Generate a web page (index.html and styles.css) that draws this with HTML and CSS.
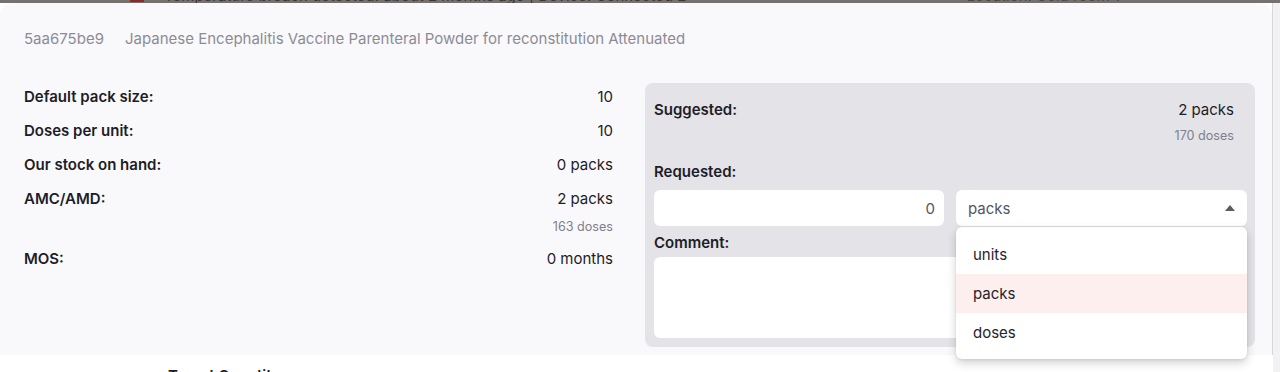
FILE: index.html
```html
<!DOCTYPE html>
<html lang="en">
<head>
    <meta charset="UTF-8">
    <meta name="viewport" content="width=device-width, initial-scale=1.0">
    <title>Request line</title>
    <link rel="stylesheet" href="styles.css">
</head>
<body>
    <div class="backdrop">
        <div class="backdrop-text">
            <span class="alert-icon"></span>
            <span>Temperature breach detected: about 2 months ago | Device: Connected 2</span>
            <span class="backdrop-loc">Location: Cold room 1</span>
        </div>
    </div>

    <div class="page">
        <div class="panel">
            <div class="panel-header">
                <span class="item-code">5aa675be9</span>
                <span class="item-name">Japanese Encephalitis Vaccine Parenteral Powder for reconstitution Attenuated</span>
            </div>

            <div class="panel-body">
                <!-- Item stats -->
                <div class="stats">
                    <div class="stat-row">
                        <span class="label">Default pack size:</span>
                        <span class="value">10</span>
                    </div>
                    <div class="stat-row">
                        <span class="label">Doses per unit:</span>
                        <span class="value">10</span>
                    </div>
                    <div class="stat-row">
                        <span class="label">Our stock on hand:</span>
                        <span class="value">0 packs</span>
                    </div>
                    <div class="stat-row">
                        <span class="label">AMC/AMD:</span>
                        <div class="value-stack">
                            <span class="value">2 packs</span>
                            <span class="sub-value">163 doses</span>
                        </div>
                    </div>
                    <div class="stat-row">
                        <span class="label">MOS:</span>
                        <span class="value">0 months</span>
                    </div>
                </div>

                <!-- Request box -->
                <div class="request-box">
                    <div class="suggested-row">
                        <span class="label">Suggested:</span>
                        <div class="value-stack">
                            <span class="value">2 packs</span>
                            <span class="sub-value">170 doses</span>
                        </div>
                    </div>

                    <div class="field-label requested-label">Requested:</div>
                    <div class="request-inputs">
                        <input class="qty-input" type="text" value="0">
                        <div class="select-wrap">
                            <div class="select">
                                <span>packs</span>
                                <svg class="select-arrow" width="10" height="6" viewBox="0 0 10 6"><path d="M0 6 L5 0 L10 6 Z" fill="#5b5b63"/></svg>
                            </div>
                            <ul class="menu">
                                <li class="menu-item">units</li>
                                <li class="menu-item active">packs</li>
                                <li class="menu-item">doses</li>
                            </ul>
                        </div>
                    </div>

                    <div class="field-label comment-label">Comment:</div>
                    <div class="comment-box"></div>
                </div>
            </div>
        </div>

        <div class="below">
            <span class="below-title">Target Quantity</span>
        </div>
    </div>
</body>
</html>
```

FILE: styles.css
```css
* {
    box-sizing: border-box;
}
body {
    margin: 0;
    padding: 0;
    font-family: Inter, "Noto Sans", sans-serif;
    background-color: #ffffff;
    color: #1d1d27;
    overflow: hidden;
    height: 372px;
}
.backdrop {
    height: 3px;
    background-color: #75716e;
    overflow: hidden;
}
.backdrop-text {
    display: flex;
    align-items: center;
    margin-top: -15px;
    height: 20px;
    padding-left: 130px;
    font-size: 15px;
    color: #3a3634;
    white-space: nowrap;
}
.alert-icon {
    display: inline-block;
    width: 14px;
    height: 14px;
    background-color: #8c2b25;
    margin-right: 20px;
}
.backdrop-loc {
    margin-left: 280px;
    color: #4a4644;
}
.page {
    display: flex;
    flex-direction: column;
    height: 369px;
    border-right: 7px solid #f2f2f4;
    box-shadow: inset -1px 0 0 #d6d6db;
}
.panel {
    background-color: #f9f9fb;
    border-radius: 12px 12px 0 0;
    padding: 26px 17px 8px 24px;
    margin-right: 1px;
}
.panel-header {
    display: flex;
    gap: 21px;
    font-size: 15px;
    line-height: 20px;
    color: #8c8c96;
}
.panel-body {
    display: flex;
    gap: 32px;
    margin-top: 34px;
}
.stats {
    width: 589px;
    padding-top: 4px;
}
.stat-row {
    display: flex;
    justify-content: space-between;
    align-items: flex-start;
    margin-bottom: 14px;
    line-height: 20px;
}
.label {
    font-size: 15px;
    font-weight: 600;
    color: #1d1d27;
}
.value {
    font-size: 15px;
    color: #1d1d27;
}
.value-stack {
    display: flex;
    flex-direction: column;
    align-items: flex-end;
}
.sub-value {
    font-size: 12.6px;
    line-height: 16px;
    color: #80808a;
    margin-top: 10px;
}
.request-box {
    flex: 1;
    background-color: #e3e3e8;
    border-radius: 8px;
    padding: 17px 8px 9px 9px;
}
.suggested-row {
    display: flex;
    justify-content: space-between;
    align-items: flex-start;
    line-height: 20px;
    padding-right: 13px;
}
.suggested-row .sub-value {
    margin-top: 8px;
}
.field-label {
    font-size: 15px;
    font-weight: 600;
    line-height: 20px;
}
.requested-label {
    margin-top: 18px;
}
.request-inputs {
    display: flex;
    gap: 12px;
    margin-top: 8px;
}
.qty-input {
    width: 290px;
    height: 36px;
    border: none;
    border-radius: 6px;
    background-color: #ffffff;
    padding: 0 9px;
    text-align: right;
    font-family: inherit;
    font-size: 15px;
    color: #55555f;
    outline: none;
}
.select-wrap {
    position: relative;
    flex: 1;
}
.select {
    display: flex;
    justify-content: space-between;
    align-items: center;
    height: 36px;
    background-color: #ffffff;
    border-radius: 6px;
    padding: 0 12px 0 12px;
    font-size: 15px;
    color: #55555f;
    box-shadow: 0 1px 2px rgba(0, 0, 0, 0.04);
}
.menu {
    position: absolute;
    top: 37px;
    left: 0;
    right: 0;
    margin: 0;
    padding: 8px 0 7px;
    list-style: none;
    background-color: #ffffff;
    border-radius: 6px;
    box-shadow: 0 4px 10px rgba(0, 0, 0, 0.18), 0 1px 3px rgba(0, 0, 0, 0.08);
    z-index: 2;
}
.menu-item {
    height: 39px;
    line-height: 39px;
    padding-left: 17px;
    font-size: 15px;
    color: #24242c;
}
.menu-item.active {
    background-color: #fcefee;
}
.comment-label {
    margin-top: 7px;
}
.comment-box {
    height: 81px;
    margin-top: 4px;
    background-color: #ffffff;
    border-radius: 6px;
}
.below {
    flex: 1;
    background-color: #ffffff;
    padding: 10px 0 0 168px;
    overflow: hidden;
}
.below-title {
    font-size: 15px;
    font-weight: 600;
    line-height: 20px;
    color: #1d1d27;
}
```
